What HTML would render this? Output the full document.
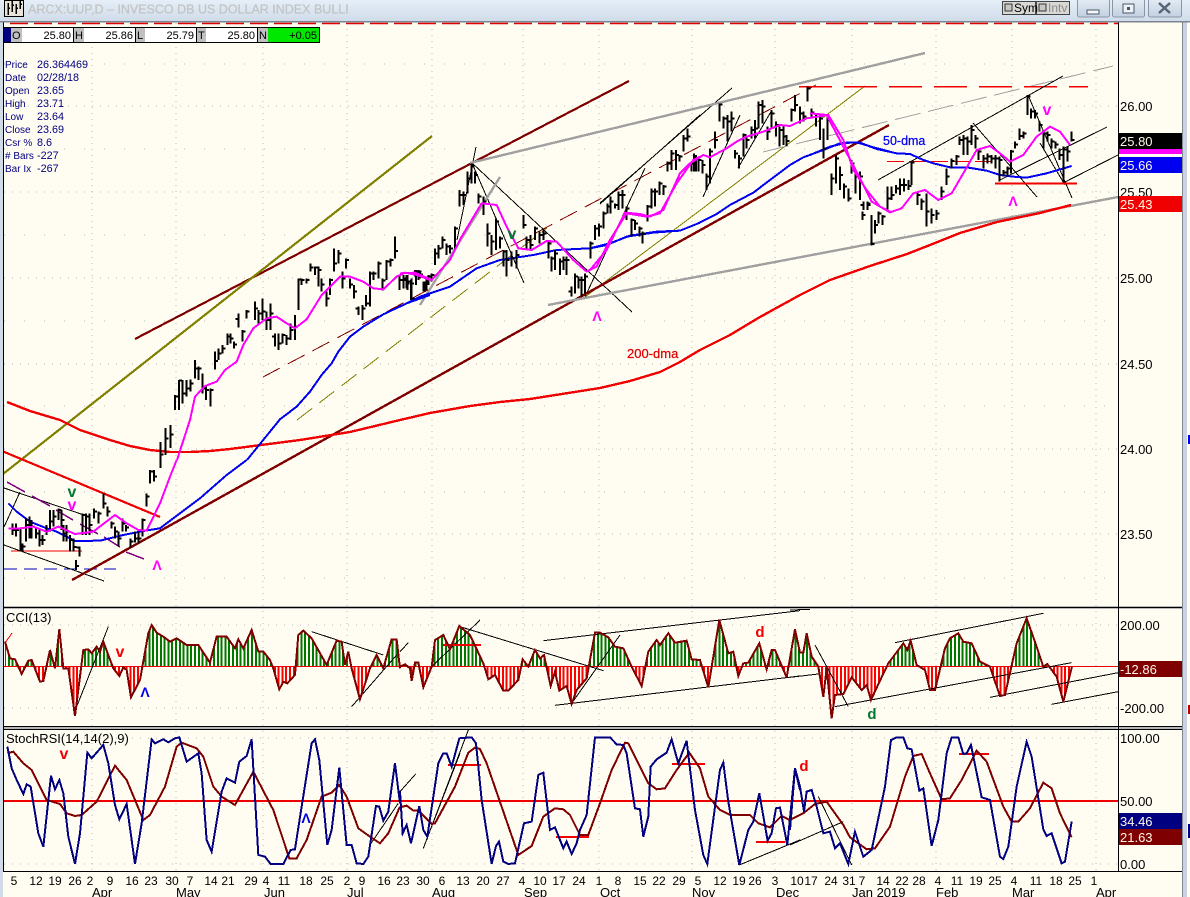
<!DOCTYPE html>
<html><head><meta charset="utf-8"><title>ARCX:UUP,D</title>
<style>html,body{margin:0;padding:0;background:#fffcf2;width:1190px;height:897px;overflow:hidden}svg{display:block}text{font-family:"Liberation Sans",sans-serif}</style></head>
<body>
<svg xmlns="http://www.w3.org/2000/svg" width="1190" height="897" viewBox="0 0 1190 897" fill="none">
<defs>
<linearGradient id="tb" x1="0" y1="0" x2="0" y2="1"><stop offset="0" stop-color="#e6eff8"/><stop offset="1" stop-color="#cfdbe9"/></linearGradient>
<linearGradient id="bt" x1="0" y1="0" x2="0" y2="1"><stop offset="0" stop-color="#e4ecf5"/><stop offset="1" stop-color="#c3d0e0"/></linearGradient>
<clipPath id="mainc"><rect x="4" y="23" width="1114" height="583"/></clipPath>
<clipPath id="subc"><rect x="4" y="609" width="1114" height="262"/></clipPath>
<polyline id="c1" points="15,125 30,175 45,178 65,222 85,182 95,180 120,245 130,243 150,150 165,205 178,88 190,205 205,205 225,348 250,150 265,148 275,160 290,140 300,155 310,125 340,205 358,228 370,202 380,210 393,292 420,240 445,100 455,75 470,98 490,110 510,125 530,115 560,135 595,135 630,188 650,110 680,110 705,145 715,118 730,145 755,90 775,155 790,155 810,180 820,205 838,268 850,245 862,250 885,225 895,105 910,92 935,115 980,195 1010,122 1025,125 1035,195 1045,155 1055,205 1080,298 1110,205 1130,165 1150,205 1175,118 1190,118 1200,205"/>
<polyline id="c2" points="0,200 15,193 30,205 35,243 45,188 55,188 70,262 95,200 105,120 130,105 150,148 178,78 210,105 250,190 265,238 285,225 310,272 325,272 355,240 368,178 385,200 405,150 420,175 432,165 452,258 465,215 478,272 500,258 515,312 530,270 560,235 585,98 600,98 625,112 645,140 670,145 695,200 725,258 745,155 770,120 780,135 805,100 825,128 860,122 875,178 900,180 925,262 958,60 985,160 1000,155 1015,228 1030,190 1045,188 1078,130 1100,208 1115,150 1125,150 1160,232"/>
<polyline id="c3" points="-10,232 15,88 30,158 40,158 50,100 65,170 85,200 100,290 110,205 125,355 135,285 160,282 185,232 215,270 230,255 243,300 270,242 295,190 340,130 352,150 362,122 380,195 405,210 420,270 435,270 465,145 480,115 505,100 520,125 545,130 570,185 600,200 630,288 645,285 680,130 710,55 740,140 760,200 772,192 800,230 820,305 846,200"/>
<clipPath id="ccia">
<polygon transform="translate(0 600) scale(.3333)" points="15,199 15,125 30,175 45,178 65,222 85,182 95,180 120,245 130,243 150,150 165,205 178,88 190,205 205,205 225,348 250,150 265,148 275,160 290,140 300,155 310,125 340,205 358,228 370,202 380,210 393,292 420,240 445,100 455,75 470,98 490,110 510,125 530,115 560,135 595,135 630,188 650,110 680,110 705,145 715,118 730,145 755,90 775,155 790,155 810,180 820,205 838,268 850,245 862,250 885,225 895,105 910,92 935,115 980,195 1010,122 1025,125 1035,195 1045,155 1055,205 1080,298 1110,205 1130,165 1150,205 1175,118 1190,118 1200,205 1200,199"/>
<polygon transform="translate(400 600) scale(.3333)" points="0,199 15,193 30,205 35,243 45,188 55,188 70,262 95,200 105,120 130,105 150,148 178,78 210,105 250,190 265,238 285,225 310,272 325,272 355,240 368,178 385,200 405,150 420,175 432,165 452,258 465,215 478,272 500,258 515,312 530,270 560,235 585,98 600,98 625,112 645,140 670,145 695,200 725,258 745,155 770,120 780,135 805,100 825,128 860,122 875,178 900,180 925,262 958,60 985,160 1000,155 1015,228 1030,190 1045,188 1078,130 1100,208 1115,150 1125,150 1160,232 1160,199"/>
<polygon transform="translate(790 600) scale(.3333)" points="-10,199 -10,232 15,88 30,158 40,158 50,100 65,170 85,200 100,290 110,205 125,355 135,285 160,282 185,232 215,270 230,255 243,300 270,242 295,190 340,130 352,150 362,122 380,195 405,210 420,270 435,270 465,145 480,115 505,100 520,125 545,130 570,185 600,200 630,288 645,285 680,130 710,55 740,140 760,200 772,192 800,230 820,305 846,200 846,199"/>
</clipPath>
</defs>

<rect width="1190" height="897" fill="#fffcf2"/>

<!-- grid -->
<g stroke="#b8b8b0" stroke-width="1" stroke-dasharray="1 7">
<path d="M4 106H1118M4 192H1118M4 278H1118M4 364H1118M4 449H1118M4 534H1118M4 625H1118M4 708H1118M4 738H1118M4 864H1118"/>
</g>
<g stroke="#b8b8b0" stroke-width="1" stroke-dasharray="1 19">
<path d="M4 64H1118M4 149H1118M4 235H1118M4 321H1118M4 406H1118M4 492H1118M4 578H1118"/>
</g>
<g stroke="#b8b8b0" stroke-width="1" stroke-dasharray="1 5">
<path d="M92 23V871M176 23V871M263 23V871M347 23V871M432 23V871M523 23V871M599 23V871M692 23V871M775 23V871M852 23V871M936 23V871M1012 23V871M1096 23V871"/>
</g>
<path d="M10 23.5H1118" stroke="#e00000" stroke-width="1.5" stroke-dasharray="18 6"/>

<g clip-path="url(#mainc)" shape-rendering="crispEdges">
<!-- thin lines -->
<g stroke-width="1">
<path d="M263 377L816 85" stroke="#800000" stroke-dasharray="19 9"/>
<path d="M297 420L547 228" stroke="#808000" stroke-dasharray="19 9"/>
<path d="M585 297L865 86" stroke="#808000"/>
<path d="M763 152L1113 66" stroke="#a0a0a0" stroke-dasharray="26 8"/>
<path d="M799 86.5H1088" stroke="#f00000" stroke-width="1.5" stroke-dasharray="33 12"/>
<path d="M887 161.5H995" stroke="#f00000" stroke-dasharray="17 5"/>
<path d="M4 569H116" stroke="#0000c0" stroke-dasharray="13 7"/>
<path d="M11 551H82" stroke="#f00000"/>
<g stroke="#000">
<path d="M4 488L84 515M4 545L104 581M4 527L20 492"/>
<path d="M476 147L457 240M472 163L632 312M472 163L524 283M585 297L645 168M600 204L700 115M600 203L732 88M703 197L740 115M738 168L772 110"/>
<path d="M878 180L1063 76M973 123L1037 197M1028 95L1072 198M1040 143L1065 185M1000 180L1107 127M1063 183L1118 155"/>
</g>
<path d="M7 482L25 492M32 496L50 506M56 510L73 520M80 524L98 534M104 537L120 547M126 552L144 559" stroke="#800080" stroke-width="1.5"/>
</g>
<!-- thick trend lines -->
<path d="M135 339L629 81" stroke="#7f0000" stroke-width="2.2"/>
<path d="M72 580L889 125" stroke="#7f0000" stroke-width="2.4"/>
<path d="M3 474L432 136" stroke="#808000" stroke-width="2.2"/>
<path d="M2 451L160 517" stroke="#f00000" stroke-width="2.2"/>
<path d="M470 163L925 53M548 305L1118 197M420 305L500 177" stroke="#a0a0a0" stroke-width="2.4"/>
<polyline stroke="#f00000" stroke-width="2.4" points="7,402 30,411 60,420 80,430 110,440 130,446 150,450 170,452 190,452 210,451 230,449 300,440 350,432 400,420 430,413 470,406 500,402 530,399 600,388 630,381 660,372 680,362 700,350 730,335 760,317 800,295 830,280 870,266 907,254 930,245 960,233 997,222 1040,213 1071,205"/>
<path d="M995 183.5H1077" stroke="#f00000" stroke-width="2"/>

<!-- blue MA -->
<g stroke="#0000f0" stroke-width="6">
<polyline transform="translate(0 460) scale(.3333)" points="25,130 50,155 90,185 140,205 170,215 225,243 300,242 370,225 430,213 480,205 520,175 600,115 680,45 740,0"/>
<polyline transform="translate(130 220) scale(.3333)" points="351,720 450,598 500,560 540,515 575,465 605,430 625,395 660,350 700,320 760,283 830,250 900,225"/>
<polyline transform="translate(400 80) scale(.3333)" points="0,680 60,650 150,620 230,565 300,540 400,525 470,510 570,505 620,495 680,470 760,458 840,452 900,428"/>
<polyline transform="translate(590 70) scale(.3333)" points="0,535 60,520 120,497 200,485 270,482 320,462 380,432 420,405 490,368 540,330 600,285 640,262 700,240 750,220 800,217 850,232 900,245"/>
<polyline transform="translate(810 80) scale(.3333)" points="0,225 60,200 110,188 150,188 200,207 260,220 300,222 340,240 370,250 420,262 470,262 530,272 570,285 610,290 650,293 710,280 785,258"/>
</g>

<!-- price bars -->
<g stroke="#000" stroke-width="6">
<path transform="translate(0 460) scale(.3333)" d="M38 190V225m0-15h9M48 190V230m0-20h9M62 205V275m0-20h9M68 250V275m0-15h9M78 175V245m0-50h9M88 170V235m0-50h9M95 180V235m0-35h9M108 205V235m0-15h9M118 205V260m0-20h9M128 225V255m0-15h9M140 195V225m0-12h9M150 150V215m0-30h9M160 150V200m0-30h9M175 145V180m0-30h9M185 150V210m0-30h9M190 195V245m0-25h9M200 195V245m0-30h9M210 225V275m0-35h9M220 235V275m0-14h9M228 300V330m0-12h9M238 260V290m0-28h-9M248 160V225m0-60h9M258 160V225m0-55h9M268 160V225m0-30h9M282 145V175m0-20h9M295 155V190m0-30h9M310 100V145m0-15h9M322 140V170m0-15h9M335 185V205m0-15h9M345 200V235m0-20h9M355 215V260m0-25h9M368 175V215m0-25h9M378 195V215m0-12h9M392 235V262m0-18h9M405 215V248m0-12h9M415 215V250m0-15h9M428 175V230m0-50h9M440 100V140m0-30h9M450 30V70m0-35h9M462 30V65m0-15h9M482 -54V24m0-40h9M497 -96V-15m0-50h9M512 -105V-36m0-40h9"/>
<path transform="translate(130 220) scale(.3333)" d="M135 525V570m0-40h9M147 480V570m0-88h9M157 480V550m0-30h9M170 480V530m0-25h9M182 478V515m0-25h9M195 420V475m0-30h9M205 440V480m0-35h9M218 460V520m0-15h9M228 500V540m0-30h9M242 505V560m0-50h9M255 395V448m0-25h9M265 385V420m0-20h9M278 375V400m0-15h9M292 340V375m0-25h9M302 340V370m0-15h9M312 365V385m0-12h9M325 280V322m0-25h-9M338 330V365m0-30h9M350 270V295m0-20h9M375 245V300m0-35h9M385 270V310m0-30h9M398 235V300m0-25h9M410 275V330m0-30h9M422 250V330m0-50h9M435 340V380m0-30h-9M445 340V390m0-20h9M458 340V370m0-25h9M470 345V375m0-20h9M482 310V360m0-30h9M495 285V360m0-40h9M505 175V270m0-92h9M515 175V195m0-15h9M530 175V190m0-10h9M542 130V155m0-12h9M555 140V165m0-22h9M565 140V200m0-50h9M575 175V215m0-22h9M590 215V260m0-25h9M600 175V225m0-45h9M612 85V155m0-25h9M625 90V130m0-30h9M638 155V205m0-30h9M648 115V145m0-25h9M660 175V205m0-12h9M672 195V235m0-20h9M685 260V285m0-20h-9M697 255V300m0-35h9M708 225V260m0-10h9M720 155V260m0-100h9M730 155V180m0-20h9M745 125V175m0-45h9M758 175V212m0-30h9M770 120V180m0-55h9M782 115V140m0-20h9M795 50V115m0-22h9M808 165V210m0-30h9M820 165V205m0-30h9M832 165V210m0-25h9M845 175V240m0-5h9M858 150V195m0-40h9M870 155V175m0-12h9M885 185V215m0-25h9M895 165V195m0-25h9"/>
<path transform="translate(400 80) scale(.3333)" d="M10 585V625m0-25h9M20 585V625m0-15h9M33 600V660m0-50h9M45 570V590m0-15h9M55 570V600m0-25h9M70 605V635m0-20h9M80 590V630m0-30h9M95 580V605m0-20h9M105 505V555m0-35h9M115 495V535m0-30h9M128 470V505m0-25h9M140 490V525m0-25h9M150 495V520m0-15h9M165 440V510m0-65h9M178 330V380m0-35h9M190 335V375m0-30h9M203 275V340m0-45h9M215 250V310m0-50h9M225 275V310m0-25h9M235 340V370m0-20h9M250 350V405m0-40h9M262 430V500m0-40h9M275 465V525m0-40h9M288 415V510m0-85h9M300 470V505m0-30h9M310 510V560m0-45h9M320 510V590m0-50h9M335 515V560m0-25h9M350 510V565m0-40h9M370 405V445m0-10h9M380 470V510m0-30h9M392 465V510m0-15h9M405 440V480m0-35h9M418 455V490m0-25h9M430 450V480m0-20h9M445 480V535m0-45h9M455 530V575m0-40h9M465 510V570m0-50h9M480 535V585m0-40h9M490 530V570m0-30h9M500 530V585m0-45h9M515 620V650m0-15h-9M525 580V640m0-50h9M535 590V625m0-25h9M545 590V650m0-50h9M555 580V640m0-50h9M572 485V535m0-45h9M585 435V480m0-35h9M597 430V470m0-30h9M610 395V445m0-45h9M622 370V400m0-20h9M632 350V400m0-35h9M645 370V385m0-10h9M655 335V390m0-45h9M668 330V385m0-40h9M680 380V420m0-35h9M695 415V470m0-50h9M705 420V450m0-20h9M718 440V470m0-25h9M728 455V490m0-30h9M742 375V425m0-45h9M755 325V385m0-50h9M765 325V380m0-45h9M778 305V345m0-35h9M790 315V345m0-25h9M803 245V275m0-25h9M815 210V270m0-50h9M828 210V270m0-45h9M838 225V245m0-15h9M850 165V215m0-40h9M862 145V185m0-15h9M875 245V275m0-25h9M888 225V275m0-40h9"/>
<path transform="translate(590 70) scale(.3333)" d="M312 250V305m0-40h9M325 260V305m0-35h9M338 270V310m0-25h9M350 310V360m0-40h9M360 235V340m0-95h9M375 185V235m0-25h9M388 100V155m0-52h9M400 140V175m0-30h9M412 135V215m0-60h9M425 125V185m0-40h9M435 240V265m0-15h9M447 255V295m0-30h9M460 190V260m0-65h9M470 200V235m0-25h9M485 170V205m0-25h9M495 150V205m0-30h9M505 95V175m0-70h9M518 90V160m0-50h9M532 170V210m0-25h9M545 120V175m0-45h9M558 155V200m0-35h9M568 170V230m0-50h9M580 170V225m0-25h9M590 195V228m0-15h9M605 115V155m0-35h9M615 75V125m0-20h9M630 110V160m0-30h9M640 125V155m0-15h9M652 50V95m0-40h9M665 115V140m0-12h9M678 130V170m0-30h9M690 130V210m0-65h9M700 175V265m0-30h9M712 135V210m0-65h9M725 310V375m0-50h9M738 255V340m0-75h9M750 290V360m0-45h9M762 340V385m0-35h9M775 355V395m0-10h9M785 270V310m0-30h9M797 310V370m0-50h9M810 305V390m0-70h9M820 395V420m0-15h-9M832 395V420m0-20h9"/>
<path transform="translate(810 80) scale(.3333)" d="M158 395V420m0-15h9M172 365V390m0-15h9M185 405V497m0-5h9M195 420V460m0-25h9M205 395V430m0-30h9M218 405V435m0-25h9M232 320V395m0-40h9M245 320V360m0-15h9M258 315V340m0-15h9M270 295V345m0-30h9M282 295V335m0-20h9M295 300V330m0-12h9M305 245V315m0-68h9M322 335V375m0-30h9M335 355V390m0-25h9M350 340V440m0-45h9M365 385V430m0-25h9M380 390V420m0-20h9M395 320V360m0-25h9M410 265V315m0-25h9M425 235V265m0-22h9M440 225V255m0-25h9M448 170V195m0-15h9M460 165V225m0-50h9M472 170V225m0-40h9M485 135V195m0-45h9M497 165V205m0-30h9M505 205V240m0-25h9M520 225V265m0-30h9M533 220V250m0-20h9M545 225V250m0-15h9M557 225V265m0-30h9M568 230V305m0-65h9M580 270V290m0-12h9M592 260V290m0-25h9M603 210V280m0-65h9M615 185V205m0-12h9M628 145V180m0-12h9M640 155V175m0-15h9M653 45V105m0-55h9M663 85V115m0-20h9M675 90V115m0-15h9M688 125V155m0-20h9M700 150V205m0-45h9M713 155V185m0-20h9M725 175V205m0-20h9M737 185V205m0-12h9M748 205V240m0-15h9M760 200V308m0-100h9M772 200V245m0-30h9M785 155V185m0-5h9"/>
</g>

<!-- magenta MA -->
<g stroke="#ff00ff" stroke-width="6">
<polyline transform="translate(0 460) scale(.3333)" points="25,205 60,205 100,200 140,215 175,200 225,222 280,215 345,165 380,190 415,210 440,212 480,130 510,50 530,0"/>
<polyline transform="translate(130 220) scale(.3333)" points="141,720 180,600 195,530 225,498 260,485 285,450 320,425 340,375 370,325 410,295 440,290 470,310 495,325 530,298 575,225 630,170 660,170 700,185 730,205 760,208 800,170 825,158 860,165 900,180"/>
<polyline transform="translate(400 80) scale(.3333)" points="0,580 45,578 95,600 150,540 185,470 245,370 290,375 320,440 355,505 395,510 440,483 470,485 520,540 560,575 590,560 630,480 680,400 740,410 780,400 830,310 880,240 900,230"/>
<polyline transform="translate(590 70) scale(.3333)" points="0,600 50,540 105,428 150,432 180,440 220,420 270,310 300,280 340,255 360,262 410,235 440,215 470,200 520,185 570,165 600,168 650,145 715,135 760,210 790,300 830,360 870,410 900,425"/>
<polyline transform="translate(810 80) scale(.3333)" points="0,100 50,105 100,200 145,285 185,365 240,397 275,385 310,340 345,330 385,360 425,340 460,280 500,210 540,198 570,220 600,245 640,225 680,170 720,140 750,155 780,195"/>
</g>
</g>

<!-- main text overlays -->
<text x="883" y="145" font-size="12.5" fill="#0000f0" stroke="#0000f0" stroke-width=".25">50-dma</text>
<text x="627" y="358" font-size="13" fill="#e00000" stroke="#e00000" stroke-width=".25">200-dma</text>
<g font-size="16" font-weight="bold" text-anchor="middle">
<text x="72" y="497" fill="#007830">v</text><text x="72" y="510" fill="#ff00ff">v</text>
<text x="512" y="239" fill="#007830">v</text><text x="1047" y="115" fill="#ff00ff">v</text>
</g>
<g font-size="14" font-weight="bold" text-anchor="middle" fill="#ff00ff">
<text x="157" y="570">Λ</text><text x="597" y="321">Λ</text><text x="1013" y="206">Λ</text>
</g>

<!-- CCI -->
<g clip-path="url(#subc)">
<path d="M4 666.5H1118" stroke="#f00000" stroke-width="1" shape-rendering="crispEdges"/>
<g clip-path="url(#ccia)" shape-rendering="crispEdges">
<path d="M4 636H1118" stroke="#007800" stroke-width="60" stroke-dasharray="2 1.8"/>
<path d="M4 697H1118" stroke="#ff0000" stroke-width="60" stroke-dasharray="2 1.8"/>
</g>
<g shape-rendering="crispEdges">
<g stroke="#000" stroke-width="3">
<path transform="translate(0 600) scale(.3333)" d="M230 320L325 80M935 95L1150 165M1055 320L1190 165"/>
<path transform="translate(400 600) scale(.3333)" d="M0 155L25 128M180 80L610 212M95 200L240 60M430 122L1200 32M465 316L1200 228M515 310L660 105"/>
<path transform="translate(790 600) scale(.3333)" d="M0 232L85 222M75 135L175 320M135 320L845 188M315 128L760 40M600 292L985 218M785 313L985 275M0 30L60 28"/>
</g>
<path d="M5 643L12 633" stroke="#f00000"/>
<path d="M443 645H481" stroke="#f00000" stroke-width="2"/>
<g stroke="#7f0000" stroke-width="6">
<use href="#c1" transform="translate(0 600) scale(.3333)"/>
<use href="#c2" transform="translate(400 600) scale(.3333)"/>
<use href="#c3" transform="translate(790 600) scale(.3333)"/>
</g>

<!-- Stoch -->
<path d="M4 801H1118" stroke="#f00000" stroke-width="2"/>
<g stroke="#f00000" stroke-width="2"><path d="M448 765H481M556 837H589M672 764H705M756 842H785M959 754H989"/></g>
<g stroke="#000" stroke-width="3">
<path transform="translate(0 600) scale(.3333)" d="M1110 735L1195 610"/>
<path transform="translate(400 600) scale(.3333)" d="M0 575L47 522M70 745L205 390M95 680L180 460M1018 795L1200 720"/>
<path transform="translate(790 600) scale(.3333)" d="M0 735L160 665M85 590L185 795"/>
</g>
<g stroke="#7f0000" stroke-width="6">
<polyline transform="translate(0 600) scale(.3333)" points="22,460 40,455 70,490 95,510 140,600 180,612 200,640 225,648 245,645 290,605 345,497 380,540 430,660 450,645 495,560 530,440 545,428 590,445 610,470 640,560 665,590 705,615 760,515 820,630 868,775 890,775 920,720 965,590 995,578 1018,555 1040,590 1075,685 1110,710 1140,730 1165,700 1200,620"/>
<polyline transform="translate(400 600) scale(.3333)" points="0,622 20,617 40,632 55,632 95,672 105,670 165,560 205,458 225,443 240,447 260,490 355,765 395,738 430,650 465,625 490,628 510,645 540,705 565,705 600,610 635,510 675,428 685,430 745,550 770,568 795,565 830,510 868,458 900,505 925,590 960,630 990,645 1050,645 1075,670 1110,682 1145,648 1170,660 1200,645"/>
<polyline transform="translate(790 600) scale(.3333)" points="30,645 40,640 75,612 110,605 160,675 180,712 230,748 255,745 300,680 345,530 370,468 395,462 420,520 455,598 480,595 515,540 560,452 590,485 640,620 665,665 685,665 720,625 760,548 785,565 810,640 845,712"/>
</g>
<g stroke="#000080" stroke-width="6">
<polyline transform="translate(0 600) scale(.3333)" points="22,440 35,505 50,540 70,582 80,553 92,560 115,700 130,740 153,527 165,568 178,540 190,580 205,710 225,792 240,700 262,458 275,475 310,435 325,490 345,615 358,658 380,612 405,792 425,670 455,418 465,430 490,418 505,427 525,415 538,412 560,485 595,460 605,520 620,720 635,755 665,575 680,535 705,548 718,485 740,468 755,418 775,765 795,770 812,792 850,792 872,750 885,748 905,620 935,430 945,418 958,480 982,735 995,690 1018,503 1040,735 1055,735 1070,790 1090,792 1105,770 1128,618 1138,620 1150,662 1165,635 1185,490 1200,610"/>
<polyline transform="translate(400 600) scale(.3333)" points="0,575 8,700 20,675 33,730 58,618 70,690 82,710 115,490 130,460 140,460 155,500 178,415 215,412 228,430 245,600 275,792 288,738 297,725 310,785 325,792 345,790 372,670 395,665 415,525 430,518 450,690 465,682 490,745 500,725 515,762 530,730 540,690 560,645 585,412 630,412 650,433 670,435 680,460 705,625 720,628 730,710 745,650 752,500 770,478 800,458 815,418 835,490 860,422 885,630 910,765 922,792 960,510 970,488 985,605 1018,795 1045,690 1060,665 1078,580 1103,722 1115,700 1128,625 1140,623 1162,735 1185,505 1200,570"/>
<polyline transform="translate(790 600) scale(.3333)" points="0,690 15,505 30,560 42,635 50,575 65,570 80,620 100,700 120,695 135,745 150,730 175,792 195,695 220,770 245,750 285,560 303,420 320,412 340,412 352,445 365,448 388,572 400,565 425,738 445,660 470,460 485,412 505,412 520,462 530,460 543,435 575,592 600,600 630,770 640,777 655,740 680,560 710,425 725,470 760,688 770,708 785,700 815,790 825,785 845,665"/>
</g>
</g>
</g>
<g font-size="16" font-weight="bold" text-anchor="middle">
<text x="120" y="657" fill="#f00000">v</text><text x="64" y="759" fill="#f00000">v</text>
</g>
<g font-size="15" font-weight="bold" text-anchor="middle">
<text x="760" y="637" fill="#f00000">d</text><text x="804" y="771" fill="#f00000">d</text>
<text x="872" y="719" fill="#007830">d</text>
</g>
<g font-size="14" font-weight="bold" text-anchor="middle" fill="#0000f0">
<text x="145" y="697">Λ</text><text x="306" y="823">Λ</text>
</g>
<text x="6" y="622" font-size="13" fill="#000">CCI(13)</text>
<text x="6" y="743" font-size="13" fill="#000">StochRSI(14,14(2),9)</text>

<!-- frames -->
<g shape-rendering="crispEdges">
<rect x="0" y="606" width="1182" height="3" fill="#b8b8b8"/><rect x="3" y="607" width="1179" height="1" fill="#000"/>
<rect x="0" y="726" width="1182" height="4" fill="#b8b8b8"/><rect x="3" y="726" width="1179" height="1" fill="#000"/><rect x="3" y="729" width="1179" height="1" fill="#000"/>
<rect x="3" y="871" width="1179" height="1" fill="#000"/>
<rect x="3" y="22" width="1" height="850" fill="#000"/>
<rect x="1118" y="22" width="1" height="850" fill="#000"/>
<rect x="1182" y="22" width="1" height="875" fill="#808890"/>
<rect x="0" y="22" width="3" height="875" fill="#d0dbe8"/>
<rect x="1183" y="22" width="4" height="875" fill="#c8d2e2"/>
<rect x="1187" y="22" width="3" height="875" fill="#fffcf2"/>
<rect x="1188" y="435" width="2" height="9" fill="#0000f0"/><rect x="1188" y="705" width="2" height="9" fill="#c00000"/><rect x="1188" y="824" width="2" height="14" fill="#000080"/>
</g>

<!-- right axis -->
<g font-size="13" fill="#000">
<text x="1120" y="111">26.00</text><text x="1120" y="197">25.50</text><text x="1120" y="283">25.00</text><text x="1120" y="369">24.50</text><text x="1120" y="454">24.00</text><text x="1120" y="539">23.50</text>
<text x="1120" y="630">200.00</text><text x="1120" y="713">-200.00</text>
<text x="1120" y="743">100.00</text><text x="1120" y="806">50.00</text><text x="1120" y="869">0.00</text>
</g>
<g shape-rendering="crispEdges">
<rect x="1119" y="149" width="63" height="5" fill="#ff00ff"/>
<rect x="1119" y="133" width="63" height="16" fill="#000"/>
<rect x="1119" y="157" width="63" height="16" fill="#0000f0"/>
<rect x="1119" y="196" width="63" height="16" fill="#f00000"/>
<rect x="1119" y="661" width="63" height="16" fill="#7f0000"/>
<rect x="1119" y="813" width="63" height="16" fill="#000080"/>
<rect x="1119" y="829" width="63" height="16" fill="#7f0000"/>
</g>
<g font-size="13" fill="#fff7e8">
<text x="1120" y="146">25.80</text><text x="1120" y="170">25.66</text><text x="1120" y="209">25.43</text><text x="1120" y="674">-12.86</text><text x="1120" y="826">34.46</text><text x="1120" y="842">21.63</text>
</g>

<!-- dates -->
<g font-size="12" fill="#000" text-anchor="middle">
<text x="14" y="885">5</text><text x="36" y="885">12</text><text x="55" y="885">19</text><text x="75" y="885">26</text><text x="90" y="885">2</text><text x="110" y="885">9</text><text x="132" y="885">16</text><text x="151" y="885">23</text><text x="172" y="885">30</text><text x="190" y="885">7</text><text x="211" y="885">14</text><text x="228" y="885">21</text><text x="251" y="885">29</text><text x="266" y="885">4</text><text x="284" y="885">11</text><text x="306" y="885">18</text><text x="327" y="885">25</text><text x="347" y="885">2</text><text x="362" y="885">9</text><text x="384" y="885">16</text><text x="403" y="885">23</text><text x="423" y="885">30</text><text x="442" y="885">6</text><text x="463" y="885">13</text><text x="483" y="885">20</text><text x="503" y="885">27</text><text x="522" y="885">4</text><text x="540" y="885">10</text><text x="559" y="885">17</text><text x="579" y="885">24</text><text x="599" y="885">1</text><text x="618" y="885">8</text><text x="640" y="885">15</text><text x="659" y="885">22</text><text x="679" y="885">29</text><text x="698" y="885">5</text><text x="720" y="885">12</text><text x="739" y="885">19</text><text x="755" y="885">26</text><text x="775" y="885">3</text><text x="797" y="885">10</text><text x="811" y="885">17</text><text x="831" y="885">24</text><text x="849" y="885">31</text><text x="862" y="885">7</text><text x="883" y="885">14</text><text x="902" y="885">22</text><text x="919" y="885">28</text><text x="938" y="885">4</text><text x="957" y="885">11</text><text x="976" y="885">19</text><text x="995" y="885">25</text><text x="1014" y="885">4</text><text x="1036" y="885">11</text><text x="1056" y="885">18</text><text x="1075" y="885">25</text><text x="1094" y="885">1</text>
</g>
<g font-size="13" fill="#000">
<text x="92" y="897">Apr</text><text x="176" y="897">May</text><text x="264" y="897">Jun</text><text x="347" y="897">Jul</text><text x="432" y="897">Aug</text><text x="524" y="897">Sep</text><text x="600" y="897">Oct</text><text x="692" y="897">Nov</text><text x="776" y="897">Dec</text><text x="852" y="897">Jan 2019</text><text x="936" y="897">Feb</text><text x="1012" y="897">Mar</text><text x="1096" y="897">Apr</text>
</g>

<!-- OHLC strip -->
<g shape-rendering="crispEdges">
<rect x="3.5" y="27.5" width="316" height="15" fill="#fff" stroke="#000"/>
<rect x="4" y="28" width="7" height="14" fill="#000080"/>
<rect x="11" y="28" width="11" height="14" fill="#c0c0c0"/>
<rect x="74" y="28" width="10" height="14" fill="#c0c0c0"/>
<rect x="136" y="28" width="9" height="14" fill="#c0c0c0"/>
<rect x="197" y="28" width="9" height="14" fill="#c0c0c0"/>
<rect x="258" y="28" width="10" height="14" fill="#c0c0c0"/>
<rect x="268" y="28" width="51" height="14" fill="#00e800"/>
<path d="M73.5 27V42M135.5 27V42M196.5 27V42M257.5 27V42" stroke="#000"/>
</g>
<g font-size="11" fill="#000">
<text x="12" y="39">O</text><text x="75" y="39">H</text><text x="137" y="39">L</text><text x="198" y="39">T</text><text x="259" y="39">N</text>
</g>
<g font-size="11" fill="#000" text-anchor="end">
<text x="71" y="39">25.80</text><text x="133" y="39">25.86</text><text x="194" y="39">25.79</text><text x="255" y="39">25.80</text><text x="317" y="39">+0.05</text>
</g>

<!-- info box -->
<g font-size="10" fill="#000080">
<text x="5" y="68">Price</text><text x="5" y="81">Date</text><text x="5" y="94">Open</text><text x="5" y="107">High</text><text x="5" y="120">Low</text><text x="5" y="133">Close</text><text x="5" y="146">Csr %</text><text x="5" y="159"># Bars</text><text x="5" y="172">Bar Ix</text>
</g>
<g font-size="10.8" fill="#000080">
<text x="37" y="68">26.364469</text><text x="37" y="81">02/28/18</text><text x="37" y="94">23.65</text><text x="37" y="107">23.71</text><text x="37" y="120">23.64</text><text x="37" y="133">23.69</text><text x="37" y="146">8.6</text><text x="37" y="159">-227</text><text x="37" y="172">-267</text>
</g>

<!-- title bar -->
<rect x="0" y="0" width="1190" height="22" fill="url(#tb)"/>
<rect x="0" y="21" width="1190" height="1.5" fill="#7c8490"/>
<rect x="4.5" y="0.5" width="19" height="16" fill="#e8e4d8" stroke="#000"/>
<path d="M8 3V15M12 1V12M16 4V14M20 1V9M8 8h2M12 5h2M16 8h2M20 4h2" stroke="#000" stroke-width="1.5" shape-rendering="crispEdges"/>
<text x="28" y="13.5" font-size="12.5" fill="#c2c4c4" stroke="#c2c4c4" stroke-width=".25">ARCX:UUP,D – INVESCO DB US DOLLAR INDEX BULLI</text>

<g shape-rendering="crispEdges">
<rect x="1002.5" y="1.5" width="33" height="13" fill="#d8d8d4" stroke="#444"/>
<rect x="1036.5" y="1.5" width="33" height="13" fill="#d8d8d4" stroke="#444"/>
<rect x="1005" y="4" width="7" height="7" fill="#c8c8c4" stroke="#333"/>
<rect x="1039" y="4" width="7" height="7" fill="#c8c8c4" stroke="#333"/>
<rect x="1077.5" y="-1" width="32" height="18" rx="2" fill="url(#bt)" stroke="#8a96a8"/>
<rect x="1112.5" y="-1" width="32" height="18" rx="2" fill="url(#bt)" stroke="#8a96a8"/>
<rect x="1148.5" y="-1" width="33" height="18" rx="2" fill="url(#bt)" stroke="#8a96a8"/>
<rect x="1087" y="10" width="12" height="4" fill="#f4f6f8" stroke="#4a5868"/>
<rect x="1123" y="4" width="11" height="9" fill="#eef2f6" stroke="#4a5868"/>
<rect x="1127" y="7" width="3" height="3" fill="#4a5868"/>
</g>
<text x="1014" y="12" font-size="12" fill="#000">Sym</text>
<text x="1048" y="12" font-size="12" fill="#8a8a8a">Intv</text>
<path d="M1159 3L1170 13M1170 3L1159 13" stroke="#566476" stroke-width="2.5"/>
</svg>
</body></html>
